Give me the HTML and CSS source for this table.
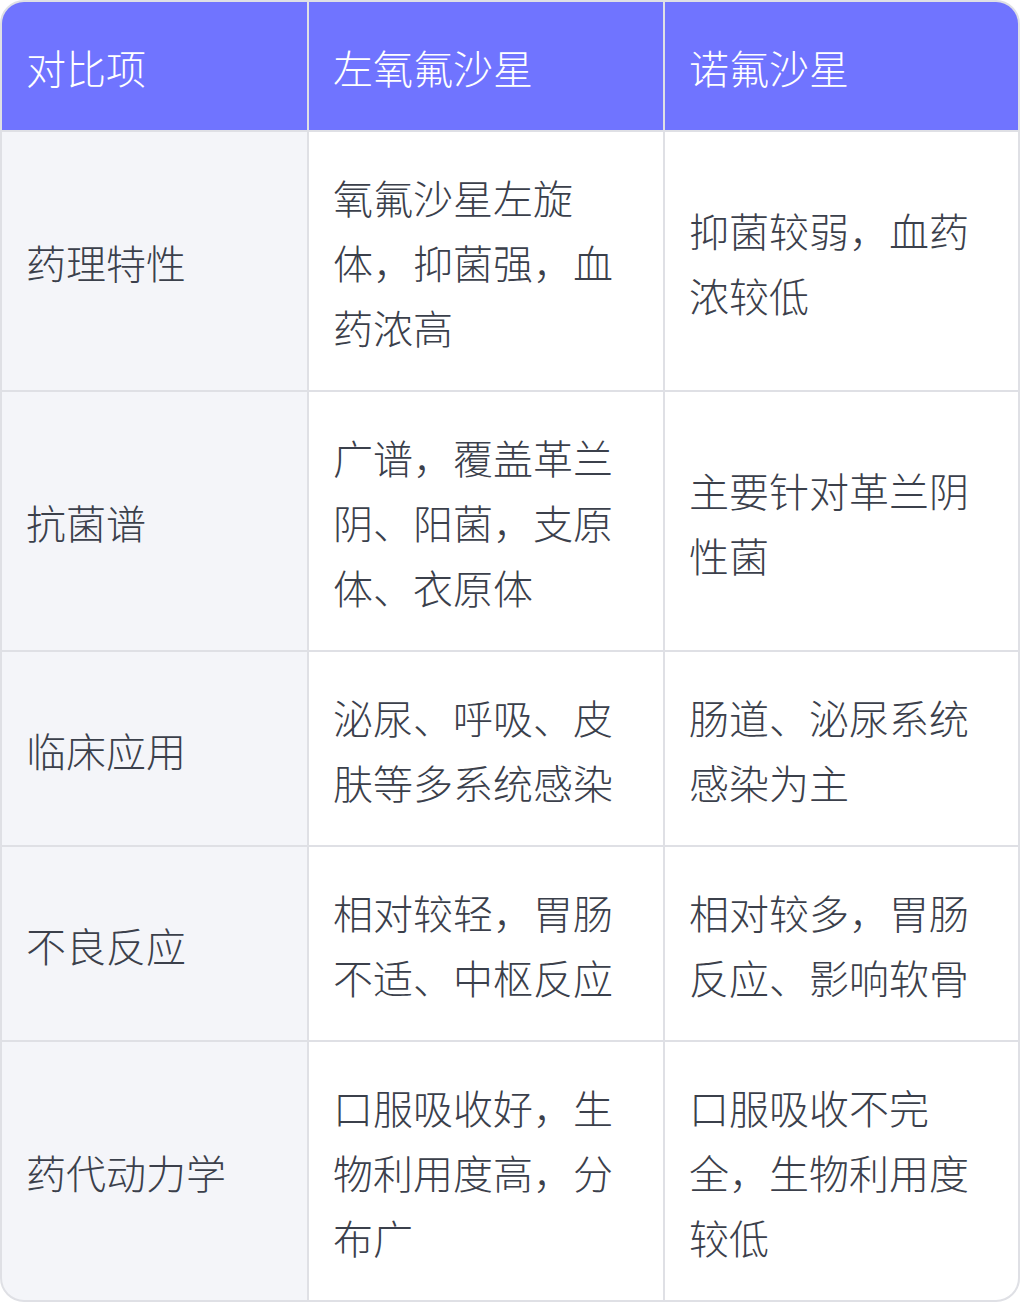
FILE: index.html
```html
<!DOCTYPE html>
<html lang="zh">
<head>
<meta charset="utf-8">
<link rel="stylesheet" href="styles.css">
</head>
<body>
<div class="table">
  <div class="cell head">对比项</div>
  <div class="cell head">左氧氟沙星</div>
  <div class="cell head">诺氟沙星</div>

  <div class="cell label">药理特性</div>
  <div class="cell">氧氟沙星左旋体，抑菌强，血药浓高</div>
  <div class="cell">抑菌较弱，血药浓较低</div>

  <div class="cell label">抗菌谱</div>
  <div class="cell">广谱，覆盖革兰阴、阳菌，支原体、衣原体</div>
  <div class="cell">主要针对革兰阴性菌</div>

  <div class="cell label">临床应用</div>
  <div class="cell">泌尿、呼吸、皮肤等多系统感染</div>
  <div class="cell">肠道、泌尿系统感染为主</div>

  <div class="cell label">不良反应</div>
  <div class="cell">相对较轻，胃肠不适、中枢反应</div>
  <div class="cell">相对较多，胃肠反应、影响软骨</div>

  <div class="cell label">药代动力学</div>
  <div class="cell">口服吸收好，生物利用度高，分布广</div>
  <div class="cell">口服吸收不完全，生物利用度较低</div>
</div>
</body>
</html>
```

FILE: styles.css
```css
html, body {
  margin: 0;
  padding: 0;
  background: #ffffff;
}

.table {
  width: 1020px;
  box-sizing: border-box;
  border: 2px solid #dfe0e5;
  border-radius: 24px;
  overflow: hidden;
  background: #dfe0e5;
  display: grid;
  grid-template-columns: 305px 354px 1fr;
  gap: 2px;
  font-family: "Noto Sans CJK SC", "Noto Sans", sans-serif;
  font-weight: 300;
  font-size: 40px;
  line-height: 65px;
  color: #3b404b;
}

.cell {
  background: #ffffff;
  padding: 33px 24px 30px;
  display: flex;
  align-items: center;
}

.cell.label {
  background: #f4f5f9;
}

.cell.head {
  background: #7074ff;
  color: #ffffff;
}
```
